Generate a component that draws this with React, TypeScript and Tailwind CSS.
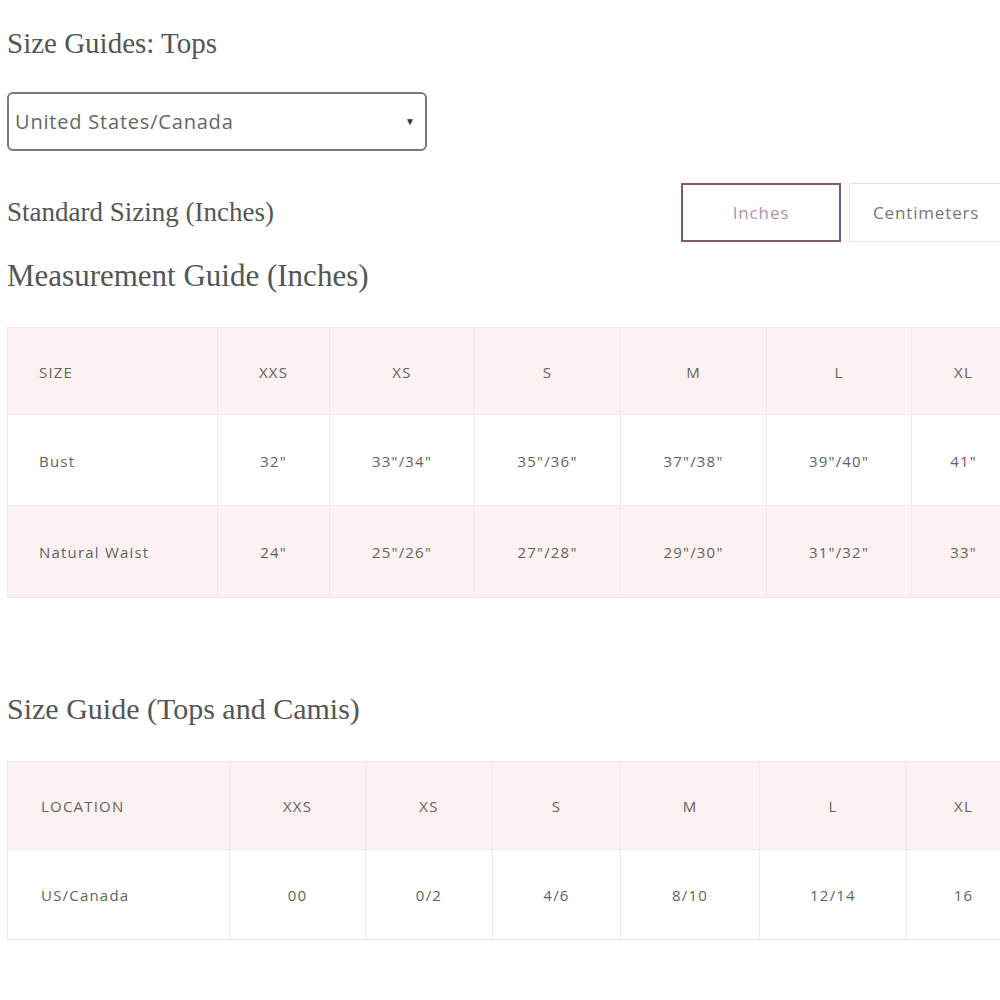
import React from "react";

const heading = { fontFamily: '"Liberation Serif", serif' };
const body = { fontFamily: '"Open Sans", "Liberation Sans", sans-serif' };

const t1Cols = "grid grid-cols-[210px_112px_145px_146px_146px_145px_104px]";
const t2Cols = "grid grid-cols-[222px_136px_127px_128px_139px_147px_114px]";

const t1 = [
  { cells: ["SIZE", "XXS", "XS", "S", "M", "L", "XL"], pink: true, h: "h-[87px]" },
  { cells: ["Bust", '32"', '33"/34"', '35"/36"', '37"/38"', '39"/40"', '41"'], pink: false, h: "h-[91px]" },
  { cells: ["Natural Waist", '24"', '25"/26"', '27"/28"', '29"/30"', '31"/32"', '33"'], pink: true, h: "h-[92px]" },
];

const t2 = [
  { cells: ["LOCATION", "XXS", "XS", "S", "M", "L", "XL"], pink: true, h: "h-[88px]" },
  { cells: ["US/Canada", "00", "0/2", "4/6", "8/10", "12/14", "16"], pink: false, h: "h-[90px]" },
];

function Table({ rows, cols, firstPad }: { rows: typeof t1; cols: string; firstPad: string }) {
  return (
    <div className="border-l border-b border-[#efe9e9] w-max" style={body}>
      {rows.map((r, i) => (
        <div key={i} className={`${cols} ${r.h} ${r.pink ? "bg-[#fdf1f1]" : "bg-white"} border-t border-[#f1eaea]`}>
          {r.cells.map((c, j) => (
            <div
              key={j}
              className={`flex items-center pt-[2px] text-[15px] font-medium tracking-[0.08em] text-[#626262] border-r border-[#efe9e9] ${
                j === 0 ? `justify-start ${firstPad}` : "justify-center"
              }`}
            >
              {c}
            </div>
          ))}
        </div>
      ))}
    </div>
  );
}

export default function App() {
  return (
    <div className="w-[1000px] h-[1000px] overflow-hidden bg-white pl-[7px]">
      <h1 className="pt-[26px] text-[29px] leading-[34px] text-[#555]" style={heading}>
        Size Guides: Tops
      </h1>
      <div
        className="mt-[32px] w-[420px] h-[59px] border-2 border-[#7a7a7a] rounded-[6px] flex items-center justify-between pl-[6px] pr-[10px]"
        style={body}
      >
        <span className="text-[20px] font-medium tracking-[0.04em] text-[#666]">United States/Canada</span>
        <span className="text-[10px] text-[#333]">▼</span>
      </div>
      <div className="mt-[32px] flex items-center w-[1100px]">
        <div className="w-[674px] shrink-0 text-[27px] text-[#555]" style={heading}>
          Standard Sizing (Inches)
        </div>
        <div className="flex gap-[8px] shrink-0" style={body}>
          <div className="w-[160px] h-[59px] border-2 border-[#84566f] flex items-center justify-center text-[17px] tracking-[0.05em] text-[#b58fad]">
            Inches
          </div>
          <div className="w-[160px] h-[59px] border border-[#e4e4e4] flex items-center justify-start pl-[23px] text-[17px] tracking-[0.05em] text-[#777]">
            Centimeters
          </div>
        </div>
      </div>
      <h2 className="mt-[17px] text-[31px] leading-[34px] text-[#555]" style={heading}>
        Measurement Guide (Inches)
      </h2>
      <div className="mt-[34px]">
        <Table rows={t1} cols={t1Cols} firstPad="pl-[31px]" />
      </div>
      <h2 className="mt-[94px] text-[30px] leading-[34px] text-[#555]" style={heading}>
        Size Guide (Tops and Camis)
      </h2>
      <div className="mt-[35px]">
        <Table rows={t2} cols={t2Cols} firstPad="pl-[33px]" />
      </div>
    </div>
  );
}
